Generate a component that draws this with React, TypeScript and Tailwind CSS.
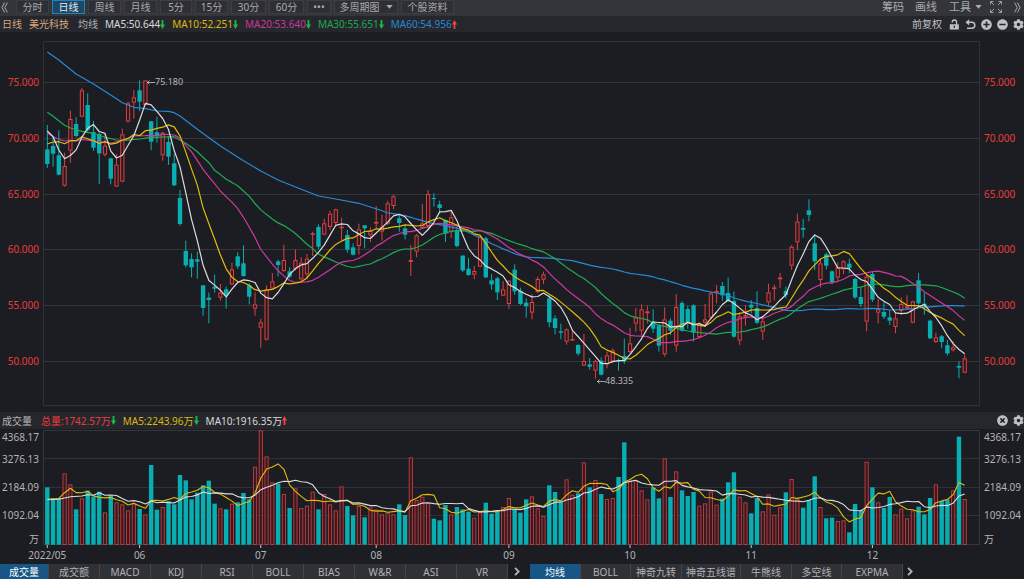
import { useState } from "react"
import clsx from "clsx"
import { FaCog, FaMinusCircle, FaPlusCircle, FaTimesCircle } from "react-icons/fa"

// [rising, high, body top, body bottom, low], in thirds of a pixel
type Row = [number, number, number, number, number]
type Point = [number, number]

// Each block keeps its rows relative to its own top
const BLOCKS: { top: number; rows: Row[] }[] = [
  {
    top: 120,
    rows: [
      [0, 255, 328, 372, 384], [0, 290, 318, 341, 380], [0, 271, 346, 404, 406], [1, 338, 378, 437, 440],
      [1, 212, 237, 332, 368], [0, 232, 252, 288, 292], [1, 144, 151, 230, 232], [0, 160, 195, 270, 275],
      [0, 243, 276, 323, 333], [0, 277, 282, 340, 432], [1, 283, 317, 344, 350], [0, 353, 355, 416, 433],
      [1, 342, 374, 440, 440], [1, 266, 283, 425, 427], [1, 185, 190, 245, 247], [1, 150, 172, 188, 236],
      [0, 121, 151, 185, 214], [1, 121, 121, 195, 197], [0, 243, 244, 305, 330], [0, 230, 277, 288, 308],
      [1, 275, 278, 346, 362], [0, 290, 306, 350, 375], [0, 341, 370, 436, 438],
    ],
  },
  {
    top: 540,
    rows: [
      [0, 30, 54, 132, 137], [0, 182, 213, 256, 262], [0, 220, 237, 262, 292], [0, 215, 238, 245, 296],
      [0, 315, 316, 384, 407], [0, 338, 353, 360, 430], [0, 284, 320, 326, 338], [1, 312, 338, 353, 362],
      [0, 320, 328, 346, 386], [1, 248, 268, 313, 316], [0, 217, 229, 259, 267], [0, 196, 250, 288, 290],
      [0, 310, 316, 350, 373], [1, 337, 373, 386, 407], [1, 417, 427, 443, 503], [1, 316, 328, 479, 482],
      [1, 279, 304, 326, 330], [0, 239, 244, 255, 289], [1, 195, 240, 273, 275], [0, 262, 274, 290, 295],
      [1, 208, 240, 267, 272], [1, 232, 248, 298, 302], [1, 222, 236, 283, 298], [1, 155, 160, 164, 228],
      [0, 133, 141, 200, 207], [1, 116, 130, 164, 166], [1, 92, 101, 141, 150], [1, 86, 88, 129, 137],
      [1, 113, 140, 142, 180], [0, 150, 165, 209, 218], [0, 190, 202, 224, 226], [1, 131, 148, 198, 224],
      [0, 136, 136, 145, 205], [1, 142, 152, 166, 186], [1, 78, 126, 131, 146], [1, 104, 140, 155, 182],
      [1, 62, 70, 131, 135], [1, 44, 49, 78, 88], [0, 103, 115, 129, 155], [0, 135, 145, 164, 178],
      [1, 195, 240, 246, 288], [1, 162, 166, 215, 232], [1, 72, 130, 144, 146], [1, 30, 42, 138, 145],
    ],
  },
  {
    top: 510,
    rows: [
      [0, 70, 84, 87, 110], [0, 92, 103, 114, 127], [0, 148, 150, 191, 216], [1, 125, 142, 185, 204],
      [0, 170, 180, 228, 232], [0, 255, 257, 301, 306], [0, 264, 296, 315, 317], [1, 288, 303, 314, 328],
      [1, 197, 200, 290, 292], [0, 200, 205, 322, 324], [0, 312, 331, 343, 359], [0, 320, 325, 367, 390],
      [1, 333, 358, 377, 378], [1, 330, 332, 402, 416], [0, 283, 299, 364, 374], [0, 353, 362, 402, 405],
      [0, 385, 398, 409, 443], [1, 373, 396, 428, 448], [1, 320, 327, 366, 370], [1, 305, 313, 329, 342],
      [0, 375, 385, 457, 472], [0, 436, 445, 474, 493], [0, 461, 484, 488, 508], [1, 475, 478, 515, 524],
      [1, 484, 507, 511, 513], [0, 523, 525, 551, 557], [1, 492, 573, 587, 588], [0, 564, 583, 590, 599],
      [1, 570, 573, 602, 626], [0, 562, 572, 614, 616], [1, 545, 556, 583, 595], [1, 535, 541, 574, 577],
      [0, 565, 572, 575, 602],
    ],
  },
  {
    top: 540,
    rows: [
      [0, 476, 528, 544, 552], [1, 443, 490, 516, 520], [1, 384, 412, 431, 455], [1, 373, 388, 452, 465],
      [1, 377, 394, 400, 430], [0, 388, 425, 446, 459], [0, 432, 436, 497, 515], [1, 382, 418, 523, 530],
      [0, 415, 422, 452, 465], [1, 342, 381, 497, 515], [0, 364, 369, 452, 455], [0, 377, 387, 430, 446],
      [0, 373, 376, 458, 485], [1, 427, 431, 471, 475], [1, 372, 418, 428, 440], [1, 333, 340, 413, 418],
      [1, 315, 333, 336, 370], [0, 306, 318, 346, 362], [0, 293, 339, 363, 366], [0, 335, 363, 470, 473],
      [1, 398, 409, 482, 495], [1, 375, 405, 410, 437], [0, 360, 374, 383, 400], [0, 334, 384, 428, 432],
      [1, 409, 424, 455, 480], [1, 311, 337, 367, 377], [1, 314, 322, 327, 362], [1, 279, 292, 298, 324],
      [0, 320, 333, 345, 355], [1, 195, 200, 257, 270], [1, 101, 125, 187, 210], [0, 117, 144, 149, 173],
      [0, 58, 91, 105, 124], [0, 163, 190, 244, 270], [1, 236, 250, 300, 322], [0, 218, 223, 257, 268],
      [0, 272, 274, 307, 313], [1, 247, 262, 293, 305], [1, 240, 244, 268, 282], [0, 236, 251, 264, 280],
      [0, 293, 297, 352, 357], [0, 322, 351, 372, 381], [1, 283, 290, 425, 454], [0, 274, 282, 359, 366],
      [1, 357, 387, 398, 430], [0, 367, 396, 410, 417], [0, 391, 412, 422, 435], [1, 399, 415, 441, 460],
      [1, 352, 372, 393, 405], [1, 346, 379, 385, 390], [1, 362, 364, 428, 430], [0, 279, 301, 370, 374],
      [0, 338, 371, 382, 404], [0, 419, 422, 475, 477], [1, 458, 472, 486, 489], [0, 465, 469, 486, 505],
      [0, 480, 496, 520, 526], [1, 484, 502, 511, 515], [0, 544, 558, 563, 595], [1, 523, 535, 578, 580],
    ],
  },
]

// Top edge of every volume bar, in thirds of a pixel below y = 400
const VOLUME = [
  262, 294, 294, 220, 253, 328, 295, 272, 290, 275, 337, 287, 307, 313, 331, 311, 327, 343, 195, 329,
  321, 303, 313, 225, 241, 298, 278, 256, 242, 311, 325, 328, 311, 307, 279, 298, 200, 91, 169, 247,
  251, 282, 324, 265, 324, 317, 275, 328, 282, 313, 331, 259, 318, 346, 318, 352, 322, 328, 343, 338,
  343, 313, 345, 172, 300, 290, 309, 356, 361, 315, 343, 321, 328, 335, 353, 337, 308, 341, 335, 321,
  294, 327, 338, 298, 289, 325, 348, 256, 276, 306, 238, 284, 280, 187, 262, 240, 282, 297, 294, 231,
  127, 243, 242, 271, 298, 262, 295, 175, 291, 214, 271, 288, 276, 317, 310, 275, 314, 296, 247, 217,
  290, 307, 340, 294, 334, 283, 344, 322, 277, 237, 296, 323, 300, 229, 321, 355, 353, 363, 361, 397,
  312, 330, 185, 262, 307, 324, 291, 343, 326, 355, 331, 320, 343, 294, 253, 303, 299, 271, 110, 297,
]

const candles = BLOCKS.flatMap(({ top, rows }) =>
  rows.map(([up, high, open, close, low]) => ({
    up: up === 1,
    high: (top + high) / 3,
    bodyTop: (top + open) / 3,
    bodyBottom: (top + close) / 3,
    low: (top + low) / 3,
  }))
)
const closes = candles.map((c) => (c.up ? c.bodyTop : c.bodyBottom))
const volumes = VOLUME.map((v) => 400 + v / 3)

const barX = (i: number) => 47.3 + i * 5.77

// Moving average; the points before the window is full come from `lead`
const average = (values: number[], size: number, lead: Point[], top: number) => {
  const out: string[] = lead.map(([i, y]) => `${barX(i).toFixed(1)},${((top + y) / 3).toFixed(1)}`)
  for (let i = size - 1; i < values.length; i++) {
    const sum = values.slice(i - size + 1, i + 1).reduce((a, b) => a + b, 0)
    out.push(`${barX(i).toFixed(1)},${(sum / size).toFixed(1)}`)
  }
  return out.join(" ")
}

const PRICE_LINES = [
  {
    stroke: "#278ad6",
    points: average(closes, 60, [
      [0, 36], [2, 60], [5, 102], [8, 132], [12, 176], [13, 188], [14, 195], [15, 202], [17, 206], [19, 213],
      [21, 214], [22, 218], [23, 228], [26, 268], [30, 318], [34, 362], [37, 393], [40, 420], [44, 448],
      [47, 468], [50, 477], [54, 490], [58, 512],
    ], 120),
  },
  {
    stroke: "#1eaa52",
    points: average(closes, 30, [
      [0, 217], [1, 229], [2, 242], [3, 256], [4, 264], [6, 274], [8, 280], [10, 292], [12, 300], [13, 302],
      [16, 297], [18, 292], [22, 290], [23, 301], [24, 310], [25, 322], [26, 335], [27, 352], [28, 368],
    ], 120),
  },
  {
    stroke: "#d038a2",
    points: average(closes, 20, [
      [0, 278], [1, 290], [2, 298], [3, 303], [4, 301], [5, 303], [6, 298], [8, 303], [11, 309], [13, 302],
      [15, 288], [17, 287], [18, 286],
    ], 120),
  },
  {
    stroke: "#e0bc0a",
    points: average(closes, 10, [
      [0, 312], [1, 306], [2, 305], [3, 311], [4, 302], [5, 302], [6, 290], [7, 296], [8, 302],
    ], 120),
  },
  { stroke: "#dcdcde", points: average(closes, 5, [[0, 273], [1, 290], [2, 330], [3, 356]], 120) },
]

const VOLUME_LINES = [
  { stroke: "#e0bc0a", points: average(volumes, 5, [[0, 297], [1, 297], [2, 295], [3, 278]], 1200) },
  {
    stroke: "#dcdcde",
    points: average(volumes, 10, [[0, 299], [2, 298], [3, 294], [4, 290], [6, 288], [7, 284], [8, 286]], 1200),
  },
]

const PRICES = ["75.000", "70.000", "65.000", "60.000", "55.000", "50.000"]
const MONTHS: [string, number][] = [
  ["2022/05", 0], ["06", 16], ["07", 37], ["08", 57], ["09", 80], ["10", 101], ["11", 122], ["12", 143],
]

const PERIODS = [
  { name: "分时", width: "w-[33px]" },
  { name: "日线", width: "w-[33px]" },
  { name: "周线", width: "w-[33px]" },
  { name: "月线", width: "w-[33px]" },
  { name: "5分", width: "w-[32px]" },
  { name: "15分", width: "w-[33px]" },
  { name: "30分", width: "w-[35px]" },
  { name: "60分", width: "w-[35px]" },
  { name: "•••", width: "w-[24px]" },
  { name: "多周期图", width: "w-[64px]", caret: true },
  { name: "个股资料", width: "w-[53px]" },
]

const INDICATORS = ["成交量", "成交额", "MACD", "KDJ", "RSI", "BOLL", "BIAS", "W&R", "ASI", "VR"]
const OVERLAYS = [
  { name: "均线", width: "w-[51px]" },
  { name: "BOLL", width: "w-[50px]" },
  { name: "神奇九转", width: "w-[51px]" },
  { name: "神奇五线谱", width: "w-[59px]" },
  { name: "牛熊线", width: "w-[51px]" },
  { name: "多空线", width: "w-[50px]" },
  { name: "EXPMA", width: "w-[61px]" },
]

const Trend = ({ up = false }: { up?: boolean }) => (
  <svg
    className={clsx("h-[9px] w-[5px]", up ? "rotate-180 text-[#f0403f]" : "text-[#19b94a]")}
    viewBox="0 0 5 9"
    fill="currentColor"
  >
    <path d="M1.6 0h1.8v4.6H5L2.5 9 0 4.6h1.6z" />
  </svg>
)

const Reading = ({ text, color, up }: { text: string; color: string; up?: boolean }) => (
  <span className={clsx("flex items-center", color)}>
    {text}
    <Trend up={up} />
  </span>
)

const Caret = () => (
  <svg className="h-[4px] w-[7px]" viewBox="0 0 7 4" fill="currentColor">
    <path d="M.3 0h6.4L3.5 3.8z" />
  </svg>
)

const DoubleChevron = ({ flip = false }: { flip?: boolean }) => (
  <svg
    className={clsx("h-[11px] w-[7px]", flip && "rotate-180")}
    viewBox="0 0 7 11"
    fill="none"
    stroke="currentColor"
  >
    <path d="M3.6.6 1 5.5l2.6 4.9M6.4.6 3.8 5.5l2.6 4.9" />
  </svg>
)

const Chevron = () => (
  <svg className="h-[9px] w-[6px]" viewBox="0 0 6 9" fill="none" stroke="currentColor" strokeWidth="1.8">
    <path d="M1 .8 4.7 4.5 1 8.2" />
  </svg>
)

const Expand = () => (
  <svg className="size-3" viewBox="0 0 12 12" fill="none" stroke="currentColor" strokeWidth=".9">
    <path d="M.5 3.5v-3h3M.5.5 4 4M8.5.5h3v3M11.5.5 8 4M.5 8.5v3h3M.5 11.5 4 8M11.5 8.5v3h-3M11.5 11.5 8 8" />
  </svg>
)

const Unlock = () => (
  <svg className="size-[11px]" viewBox="0 0 11 11" fill="currentColor">
    <path fillRule="evenodd" d="M.8 5.2h9v5.3h-9zM4.6 6.8v2h1.4v-2z" />
    <path d="M3.2 3.6v-.4a2.2 2.2 0 0 1 4.4 0v2.2" fill="none" stroke="currentColor" strokeWidth="1.3" />
  </svg>
)

const Undo = () => (
  <svg className="size-[11px]" viewBox="0 0 11 11" fill="none" stroke="currentColor" strokeWidth="1.5">
    <path d="M3 3.3h3.8a3 3 0 0 1 0 6H2" />
    <path d="M4.2.2v6.2L.4 3.3z" fill="currentColor" stroke="none" />
  </svg>
)

const Note = ({ text, x, top }: { text: string; x: number; top: string }) => (
  <span
    className={clsx("absolute flex items-center text-[9px] leading-3 text-[#b4b5b8]", top)}
    style={{ left: `${((x - 43) / 937) * 100}%` }}
  >
    <svg className="h-[5px] w-2" viewBox="0 0 8 5" fill="none" stroke="currentColor" strokeWidth=".9">
      <path d="M0 2.5h8M2.500.5l-2 2 2 2" />
    </svg>
    {text}
  </span>
)

const PriceAxis = ({ right = false }: { right?: boolean }) => (
  <div
    className={clsx(
      "flex shrink-0 flex-col pt-[22px] pb-[23px] text-[#ea3b3d]",
      right ? "w-11 pl-1" : "w-[43px] items-end pr-1"
    )}
  >
    {PRICES.map((price) => (
      <span key={price} className="flex flex-1 items-center">
        {price}
      </span>
    ))}
  </div>
)

const VolumeAxis = ({ right = false }: { right?: boolean }) => (
  <div
    className={clsx(
      "flex shrink-0 flex-col *:flex *:items-center",
      right ? "w-11 pl-1" : "w-[43px] items-end pr-1"
    )}
  >
    <span className="h-4">4368.17</span>
    <span className="h-7">3276.13</span>
    <span className="h-7">2184.09</span>
    <span className="h-7">1092.04</span>
    <span className="h-5">万</span>
  </div>
)

const PriceChart = () => (
  <svg className="block h-[380px] w-full" viewBox="43 32 937 380" preserveAspectRatio="none" fill="none">
    <path d="M43.5 41.5h936v364h-936z" stroke="#303136" />
    <path
      d="M44 82.5h935M44 138.5h935M44 194.5h935M44 249.5h935M44 305.5h935M44 361.5h935"
      stroke="#34363a"
    />
    {candles.map((c, i) => {
      const x = barX(i)
      const height = Math.max(c.bodyBottom - c.bodyTop, 1)
      return c.up ? (
        <g key={i} stroke="#e04042">
          <path d={`M${x} ${c.high}V${c.bodyTop}M${x} ${c.bodyBottom}V${c.low}`} />
          <rect x={x - 1.6} y={c.bodyTop + 0.5} width="3.2" height={Math.max(height - 1, 0.6)} fill="#261b20" />
        </g>
      ) : (
        <g key={i}>
          <path d={`M${x} ${c.high}V${c.low}`} stroke="#09aeb2" />
          <rect x={x - 2.2} y={c.bodyTop} width="4.4" height={height} fill="#09aeb2" />
        </g>
      )
    })}
    {PRICE_LINES.map((line) => (
      <polyline
        key={line.stroke}
        points={line.points}
        stroke={line.stroke}
        strokeWidth="1.2"
        strokeLinejoin="round"
      />
    ))}
  </svg>
)

const VolumeChart = () => (
  <svg className="block h-[120px] w-full" viewBox="43 429 937 120" preserveAspectRatio="none" fill="none">
    <path d="M43.5 430.5h936v114h-936z" stroke="#34363a" />
    <path d="M44 458.5h935M44 487.5h935M44 515.5h935" stroke="#303136" />
    {volumes.map((y, i) =>
      candles[i].up ? (
        <rect
          key={i}
          x={barX(i) - 1.6}
          y={y + 0.5}
          width="3.2"
          height={544 - y}
          fill="#3b191e"
          stroke="#c43d43"
          strokeWidth=".9"
        />
      ) : (
        <rect key={i} x={barX(i) - 2.2} y={y} width="4.4" height={544.7 - y} fill="#09aeb2" />
      )
    )}
    {VOLUME_LINES.map((line) => (
      <polyline
        key={line.stroke}
        points={line.points}
        stroke={line.stroke}
        strokeWidth="1.1"
        strokeLinejoin="round"
      />
    ))}
    {MONTHS.map(([name, i]) => (
      <path key={name} d={`M${barX(i)} 545v3`} stroke="#c8c9cb" />
    ))}
  </svg>
)

export default function App() {
  const [period, setPeriod] = useState("日线")
  const [indicator, setIndicator] = useState("成交量")
  const [overlay, setOverlay] = useState("均线")

  const tab = (active: boolean) =>
    clsx(
      "flex h-full items-center justify-center whitespace-nowrap border-r border-[#45464b]",
      active ? "bg-[#175685] text-white" : "bg-[#303137] text-[#b0b1b5]"
    )

  return (
    <main className="w-full overflow-hidden bg-[#1c1d22] font-['Noto_Sans','Noto_Sans_CJK_SC',sans-serif] text-[10px] leading-3 text-[#b3b4b7]">
      {/* Period toolbar */}
      <header className="flex h-4 items-start justify-between bg-[#34353a] text-[#a9aaae]">
        <nav className="flex h-[14px] items-center gap-[3px]">
          <button aria-label="收起" className="w-[13px] pl-px">
            <DoubleChevron />
          </button>
          {PERIODS.map(({ name, width, caret }) => (
            <button
              key={name}
              onClick={() => setPeriod(name)}
              className={clsx(
                "flex h-full items-center justify-center gap-1.5 border whitespace-nowrap",
                width,
                name === period
                  ? "border-[#2383bb] bg-[#1d4765] text-[#e4e8ec]"
                  : "border-[#3d3e43] bg-[#2e2f34]"
              )}
            >
              {name}
              {caret && <Caret />}
            </button>
          ))}
        </nav>
        <div className="flex h-[14px] items-center pr-[3px] text-[11px]">
          <button className="mr-[11px]">筹码</button>
          <button className="mr-3">画线</button>
          <button className="mr-2 flex items-center gap-1">
            工具
            <Caret />
          </button>
          <button aria-label="全屏" className="mr-3">
            <Expand />
          </button>
          <button aria-label="展开">
            <DoubleChevron flip />
          </button>
        </div>
      </header>

      {/* Moving average readings */}
      <section className="flex h-4 items-center justify-between bg-[#26272c]">
        <div className="flex items-center gap-[7px] pl-0.5">
          <span className="text-[#d6a87e]">日线</span>
          <span className="text-[#d6a87e]">美光科技</span>
          <span className="ml-0.5">均线</span>
          <Reading text="MA5:50.644" color="text-[#d9dadc]" />
          <Reading text="MA10:52.251" color="text-[#dcb80e]" />
          <Reading text="MA20:53.640" color="text-[#c9379c]" />
          <Reading text="MA30:55.651" color="text-[#1ea852]" />
          <Reading text="MA60:54.956" color="text-[#2788d2]" up />
        </div>
        <div className="flex items-center gap-[5px] text-[#c0c1c4]">
          <button className="mr-0.5">前复权</button>
          <button aria-label="解锁">
            <Unlock />
          </button>
          <button aria-label="撤销">
            <Undo />
          </button>
          <button aria-label="放大">
            <FaPlusCircle className="size-[11px]" />
          </button>
          <button aria-label="缩小">
            <FaMinusCircle className="size-[11px]" />
          </button>
          <button aria-label="设置">
            <FaCog className="size-[11px]" />
          </button>
        </div>
      </section>

      <section className="flex">
        <PriceAxis />
        <div className="relative min-w-0 flex-1">
          <PriceChart />
          <Note text="75.180" x={147} top="top-[44px]" />
          <Note text="48.335" x={597} top="top-[343px]" />
        </div>
        <PriceAxis right />
      </section>

      {/* Volume */}
      <section className="flex h-[17px] items-center justify-between bg-[#26272c]">
        <div className="flex items-center gap-[7px] pl-0.5">
          <span className="mr-0.5">成交量</span>
          <Reading text="总量:1742.57万" color="text-[#ea3b3d]" />
          <Reading text="MA5:2243.96万" color="text-[#dcb80e]" />
          <Reading text="MA10:1916.35万" color="text-[#d9dadc]" up />
        </div>
        <div className="flex items-center gap-[5px] text-[#c0c1c4]">
          <button aria-label="关闭">
            <FaTimesCircle className="size-[11px]" />
          </button>
          <button aria-label="设置">
            <FaCog className="size-[11px]" />
          </button>
        </div>
      </section>

      <section className="flex">
        <VolumeAxis />
        <div className="min-w-0 flex-1">
          <VolumeChart />
          <div className="relative h-[15px]">
            {MONTHS.map(([name, i]) => (
              <span
                key={name}
                className="absolute top-0 -translate-x-1/2"
                style={{ left: `${((barX(i) - 43) / 937) * 100}%` }}
              >
                {name}
              </span>
            ))}
          </div>
        </div>
        <VolumeAxis right />
      </section>

      {/* Indicator tabs */}
      <footer className="flex h-[15px] items-center">
        <nav className="flex h-full">
          {INDICATORS.map((name, i) => (
            <button
              key={name}
              onClick={() => setIndicator(name)}
              className={clsx(tab(name === indicator), i === 0 ? "w-[49px]" : "w-[51px]")}
            >
              {name}
            </button>
          ))}
        </nav>
        <button aria-label="更多指标" className="flex w-[22px] justify-center pr-1">
          <Chevron />
        </button>
        <nav className="flex h-full">
          {OVERLAYS.map(({ name, width }) => (
            <button
              key={name}
              onClick={() => setOverlay(name)}
              className={clsx(tab(name === overlay), width)}
            >
              {name}
            </button>
          ))}
        </nav>
        <button aria-label="更多主图指标" className="flex w-[14px] justify-center">
          <Chevron />
        </button>
      </footer>
    </main>
  )
}
